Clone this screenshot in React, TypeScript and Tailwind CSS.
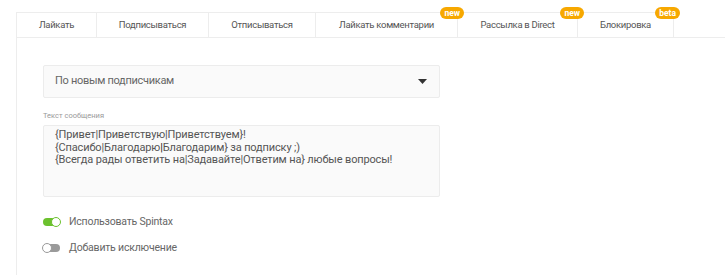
const tabs = [
  { label: "Лайкать", w: "w-[80px]" },
  { label: "Подписываться", w: "w-[112px]" },
  { label: "Отписываться", w: "w-[107px]" },
  { label: "Лайкать комментарии", w: "w-[142px]", badge: "new" },
  { label: "Рассылка в Direct", w: "w-[120px]", badge: "new" },
  { label: "Блокировка", w: "w-[96px]", badge: "beta" },
];

function Toggle({ on, label }: { on: boolean; label: string }) {
  return (
    <div className="flex h-[12px] items-center gap-[9px]">
      <div
        className={`relative h-[8px] w-[17px] rounded-full ${on ? "bg-[#6cc12e]" : "bg-[#9a9a9a]"}`}
      >
        <div
          className={`absolute top-[-1px] h-[10px] w-[10px] rounded-full border bg-white ${
            on ? "right-[-1px] border-[#6cc12e]" : "left-[-1px] border-[#9a9a9a]"
          }`}
        ></div>
      </div>
      <span className="text-[10.5px] tracking-[-0.2px] text-[#666]">{label}</span>
    </div>
  );
}

export default function App() {
  return (
    <div
      className="h-[275px] w-[725px] overflow-hidden bg-white pl-[16px] pt-[12px]"
      style={{ fontFamily: "Roboto, Arial, sans-serif" }}
    >
      <div className="h-full border-l border-[#ededed]">
        <div className="flex border-b border-[#ededed]">
          {tabs.map((t) => (
            <div
              key={t.label}
              className={`relative flex h-[25px] items-center justify-center border-r border-t border-[#ededed] text-[9.5px] tracking-[-0.3px] text-[#555] ${t.w}`}
            >
              {t.label}
              {t.badge && (
                <span className="absolute right-[-7px] top-[-6px] z-10 flex h-[12px] items-center justify-center rounded-full bg-[#f7a800] px-[4px] text-[8.5px] font-bold leading-none tracking-normal text-white">
                  {t.badge}
                </span>
              )}
            </div>
          ))}
        </div>

        <div className="pl-[26px] pt-[27px]">
          <div className="flex h-[33px] w-[397px] items-center justify-between rounded-[2px] border border-[#ececec] bg-[#fafafa] pl-[11px] pr-[12px]">
            <span className="text-[11px] tracking-[-0.3px] text-[#666]">По новым подписчикам</span>
            <svg width="9" height="5" viewBox="0 0 9 5">
              <path d="M0 0 L9 0 L4.5 5 Z" fill="#333" />
            </svg>
          </div>

          <div className="mt-[13px] text-[7.5px] leading-[9px] text-[#999]">Текст сообщения</div>

          <div className="mt-[5px] h-[72px] w-[397px] rounded-[2px] border border-[#ececec] bg-[#fafafa] px-[11px] pt-[3px] text-[11px] leading-[12.5px] tracking-[-0.15px] text-[#555]">
            <div>{"{Привет|Приветствую|Приветствуем}!"}</div>
            <div>
              {"{Спасибо|Благодарю"}
              <span className="text-[#222]">|</span>
              {"Благодарим} за подписку ;)"}
            </div>
            <div>{"{Всегда рады ответить на|Задавайте|Ответим на} любые вопросы!"}</div>
          </div>

          <div className="mt-[19px] flex flex-col gap-[14px]">
            <Toggle on label="Использовать Spintax" />
            <Toggle on={false} label="Добавить исключение" />
          </div>
        </div>
      </div>
    </div>
  );
}
